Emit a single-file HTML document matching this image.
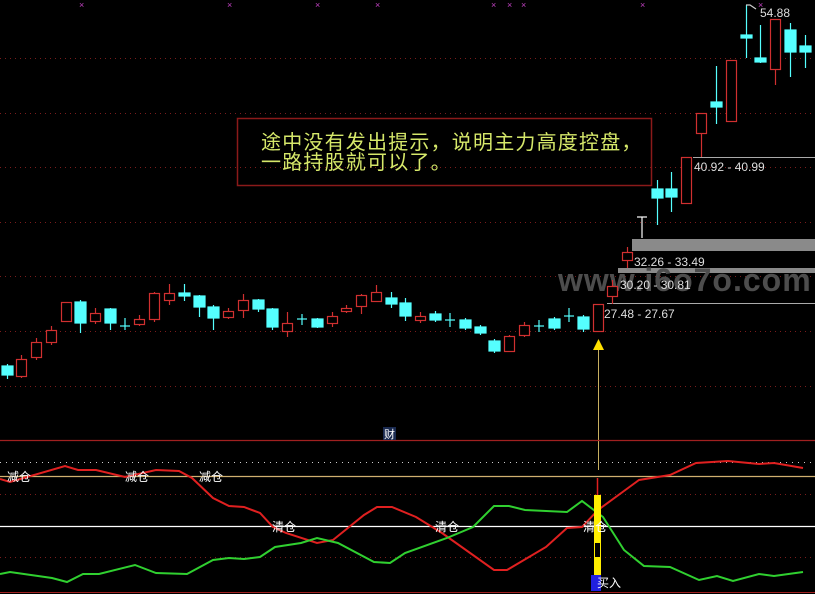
<!DOCTYPE html>
<html><head><meta charset="utf-8"><style>
html,body{margin:0;padding:0;background:#000;width:815px;height:594px;overflow:hidden}
svg{display:block}
text{font-family:"Liberation Sans","Noto Sans CJK SC",sans-serif}
</style></head><body>
<svg width="815" height="594" viewBox="0 0 815 594" xmlns="http://www.w3.org/2000/svg">
<rect width="815" height="594" fill="#000"/>
<g stroke="#7a1c1c" stroke-dasharray="1,4" stroke-width="1">
<line x1="0" y1="58.5" x2="815" y2="58.5"/><line x1="0" y1="113.5" x2="815" y2="113.5"/>
<line x1="0" y1="167.5" x2="815" y2="167.5"/><line x1="0" y1="222.5" x2="815" y2="222.5"/>
<line x1="0" y1="276.5" x2="815" y2="276.5"/><line x1="0" y1="331.5" x2="815" y2="331.5"/>
<line x1="0" y1="386.5" x2="815" y2="386.5"/>
<line x1="0" y1="494.5" x2="815" y2="494.5"/><line x1="0" y1="557.5" x2="815" y2="557.5"/>
</g>
<line x1="0" y1="462.5" x2="815" y2="462.5" stroke="#ccc" stroke-dasharray="1,5"/>
<g fill="#c040c0" font-size="9"><text x="79" y="8">×</text><text x="227" y="8">×</text><text x="315" y="8">×</text><text x="375" y="8">×</text><text x="491" y="8">×</text><text x="507" y="8">×</text><text x="521" y="8">×</text><text x="640" y="8">×</text><text x="758" y="8">×</text></g>
<rect x="632" y="239" width="183" height="12" fill="#8a8a8a"/>
<rect x="618" y="268" width="197" height="5" fill="#8a8a8a"/>
<line x1="607" y1="303.5" x2="815" y2="303.5" stroke="#aaa"/>
<line x1="693" y1="157.5" x2="815" y2="157.5" stroke="#aaa"/>
<text x="558" y="291" font-size="32" fill="#4d4d4d" font-weight="bold" letter-spacing="1">www.i6o7o.com</text>
<g fill="#ddd" font-size="12"><text x="694" y="171">40.92 - 40.99</text><text x="634" y="266">32.26 - 33.49</text><text x="620" y="289">30.20 - 30.81</text><text x="604" y="318">27.48 - 27.67</text><text x="760" y="17">54.88</text></g>
<g stroke="#d03030" fill="#000" stroke-width="1.2">
<line x1="21.5" y1="355" x2="21.5" y2="378"/><rect x="16.5" y="359.5" width="10" height="17"/>
<line x1="36.5" y1="338" x2="36.5" y2="360"/><rect x="31.5" y="342.5" width="10" height="15"/>
<line x1="51.5" y1="326" x2="51.5" y2="345"/><rect x="46.5" y="330.5" width="10" height="12"/>
<rect x="61.5" y="302.5" width="10" height="19"/>
<line x1="95.5" y1="308" x2="95.5" y2="324"/><rect x="90.5" y="313.5" width="10" height="8"/>
<line x1="139.5" y1="315" x2="139.5" y2="326"/><rect x="134.5" y="319.5" width="10" height="5"/>
<line x1="154.5" y1="292" x2="154.5" y2="322"/><rect x="149.5" y="293.5" width="10" height="26"/>
<line x1="169.5" y1="284" x2="169.5" y2="305"/><rect x="164.5" y="293.5" width="10" height="7"/>
<line x1="228.5" y1="308" x2="228.5" y2="319"/><rect x="223.5" y="311.5" width="10" height="6"/>
<line x1="243.5" y1="294" x2="243.5" y2="318"/><rect x="238.5" y="300.5" width="10" height="10"/>
<line x1="287.5" y1="312" x2="287.5" y2="337"/><rect x="282.5" y="323.5" width="10" height="8"/>
<line x1="332.5" y1="312" x2="332.5" y2="327"/><rect x="327.5" y="316.5" width="10" height="7"/>
<line x1="346.5" y1="305" x2="346.5" y2="313"/><rect x="341.5" y="308.5" width="10" height="3"/>
<line x1="361.5" y1="294" x2="361.5" y2="314"/><rect x="356.5" y="295.5" width="10" height="11"/>
<line x1="376.5" y1="285" x2="376.5" y2="302"/><rect x="371.5" y="292.5" width="10" height="9"/>
<line x1="420.5" y1="312" x2="420.5" y2="323"/><rect x="415.5" y="316.5" width="10" height="4"/>
<line x1="509.5" y1="335" x2="509.5" y2="352"/><rect x="504.5" y="336.5" width="10" height="15"/>
<line x1="524.5" y1="322" x2="524.5" y2="337"/><rect x="519.5" y="325.5" width="10" height="10"/>
<rect x="593.5" y="304.5" width="10" height="27"/>
<line x1="612.5" y1="280" x2="612.5" y2="304"/><rect x="607.5" y="286.5" width="10" height="10"/>
<line x1="627.5" y1="247" x2="627.5" y2="268"/><rect x="622.5" y="252.5" width="10" height="8"/>
<rect x="681.5" y="157.5" width="10" height="46"/>
<line x1="701.5" y1="133" x2="701.5" y2="157"/><rect x="696.5" y="113.5" width="10" height="20"/>
<rect x="726.5" y="60.5" width="10" height="61"/>
<line x1="775.5" y1="69" x2="775.5" y2="85"/><rect x="770.5" y="19.5" width="10" height="50"/>
</g>
<g stroke="#5ff" fill="#5ff" stroke-width="1.2">
<line x1="7.5" y1="364" x2="7.5" y2="379"/><rect x="2" y="366" width="11" height="9"/>
<line x1="80.5" y1="300" x2="80.5" y2="333"/><rect x="75" y="302" width="11" height="21"/>
<line x1="110.5" y1="308" x2="110.5" y2="330"/><rect x="105" y="309" width="11" height="14"/>
<line x1="125" y1="318" x2="125" y2="330"/><line x1="120" y1="326" x2="130" y2="326"/>
<line x1="184.5" y1="284" x2="184.5" y2="301"/><rect x="179" y="293" width="11" height="3"/>
<line x1="199.5" y1="295" x2="199.5" y2="317"/><rect x="194" y="296" width="11" height="11"/>
<line x1="213.5" y1="305" x2="213.5" y2="330"/><rect x="208" y="307" width="11" height="11"/>
<line x1="258.5" y1="299" x2="258.5" y2="312"/><rect x="253" y="300" width="11" height="9"/>
<line x1="272.5" y1="308" x2="272.5" y2="330"/><rect x="267" y="309" width="11" height="18"/>
<line x1="302" y1="314" x2="302" y2="325"/><line x1="297" y1="319" x2="307" y2="319"/>
<line x1="317.5" y1="318" x2="317.5" y2="328"/><rect x="312" y="319" width="11" height="8"/>
<line x1="391.5" y1="292" x2="391.5" y2="308"/><rect x="386" y="298" width="11" height="6"/>
<line x1="405.5" y1="298" x2="405.5" y2="321"/><rect x="400" y="303" width="11" height="13"/>
<line x1="435.5" y1="311" x2="435.5" y2="322"/><rect x="430" y="314" width="11" height="6"/>
<line x1="450" y1="313" x2="450" y2="327"/><line x1="445" y1="320" x2="455" y2="320"/>
<line x1="465.5" y1="318" x2="465.5" y2="330"/><rect x="460" y="320" width="11" height="8"/>
<line x1="480.5" y1="325" x2="480.5" y2="335"/><rect x="475" y="327" width="11" height="6"/>
<line x1="494.5" y1="339" x2="494.5" y2="353"/><rect x="489" y="341" width="11" height="10"/>
<line x1="539" y1="320" x2="539" y2="332"/><line x1="534" y1="326" x2="544" y2="326"/>
<line x1="554.5" y1="317" x2="554.5" y2="330"/><rect x="549" y="319" width="11" height="9"/>
<line x1="569" y1="308" x2="569" y2="322"/><line x1="564" y1="316" x2="574" y2="316"/>
<line x1="583.5" y1="315" x2="583.5" y2="332"/><rect x="578" y="317" width="11" height="12"/>
<line x1="657.5" y1="180" x2="657.5" y2="225"/><rect x="652" y="189" width="11" height="9"/>
<line x1="671.5" y1="172" x2="671.5" y2="212"/><rect x="666" y="189" width="11" height="8"/>
<line x1="716.5" y1="66" x2="716.5" y2="124"/><rect x="711" y="102" width="11" height="5"/>
<line x1="746.5" y1="5" x2="746.5" y2="58"/><rect x="741" y="35" width="11" height="3"/>
<line x1="760.5" y1="25" x2="760.5" y2="63"/><rect x="755" y="58" width="11" height="4"/>
<line x1="790.5" y1="23" x2="790.5" y2="77"/><rect x="785" y="30" width="11" height="22"/>
<line x1="805.5" y1="35" x2="805.5" y2="68"/><rect x="800" y="46" width="11" height="6"/>
</g>
<g stroke="#fff" stroke-width="1.2"><line x1="642" y1="217" x2="642" y2="238"/><line x1="637" y1="217" x2="647" y2="217"/><path d="M746 5 L750 5 L756 9" fill="none" stroke="#ccc"/></g>
<rect x="237.5" y="118.5" width="414" height="67" fill="none" stroke="#8b1a1a" stroke-width="1.5"/>
<g fill="#d6e86a" font-size="20"><text x="261" y="149" letter-spacing="1.2">途中没有发出提示，说明主力高度控盘，</text><text x="261" y="169" letter-spacing="1.2">一路持股就可以了。</text></g>
<line x1="598.5" y1="345" x2="598.5" y2="470" stroke="#c8b060"/>
<polygon points="598.5,339 593,350 604,350" fill="#ffe000"/>
<line x1="0" y1="440.5" x2="815" y2="440.5" stroke="#a02020" stroke-width="1.2"/>
<line x1="0" y1="592.5" x2="815" y2="592.5" stroke="#a02020"/>
<rect x="383" y="427" width="13" height="13" fill="#1a2a50"/><text x="384" y="438" font-size="11" fill="#fff">财</text>
<line x1="0" y1="476.5" x2="815" y2="476.5" stroke="#d0b070" stroke-width="1.2"/>
<line x1="0" y1="526.5" x2="815" y2="526.5" stroke="#fff" stroke-width="1.2"/>
<polyline fill="none" stroke="#e02020" stroke-width="2" points="0,479 10,482 65,466 78,470 96,470 125,477 156,470 179,471 192,478 213,498 229,506 244,507 260,513 273,527 286,533 317,543 333,540 364,515 377,507 392,507 416,517 442,533 494,570 507,570 546,547 567,528 582,527 598,510 639,480 670,475 696,463 728,461 759,464 774,463 803,468"/>
<polyline fill="none" stroke="#30d030" stroke-width="2" points="0,574 10,572 52,578 67,582 83,574 99,574 135,565 156,573 187,574 213,560 229,558 244,559 260,557 275,547 301,543 317,538 338,543 374,562 390,563 405,553 447,538 473,527 494,506 509,506 525,510 567,512 582,501 603,517 624,550 644,566 670,567 699,580 717,576 733,581 759,574 774,576 803,572"/>
<line x1="597.5" y1="478" x2="597.5" y2="495" stroke="#e02020" stroke-width="1.5"/>
<rect x="594" y="495" width="7" height="25" fill="#ffee00"/>
<rect x="594" y="520" width="7" height="22" fill="#ffee00"/>
<rect x="594.5" y="542.5" width="6" height="15" fill="#000" stroke="#ffee00"/>
<rect x="594" y="558" width="7" height="17" fill="#ffee00"/>
<rect x="591" y="575" width="10" height="16" fill="#2020e0"/>
<g fill="#fff" font-size="12"><text x="597" y="587">买入</text>
<text x="7" y="481">减仓</text><text x="125" y="481">减仓</text><text x="199" y="481">减仓</text>
<text x="272" y="531">清仓</text><text x="435" y="531">清仓</text><text x="583" y="531">清仓</text></g>
</svg>
</body></html>
